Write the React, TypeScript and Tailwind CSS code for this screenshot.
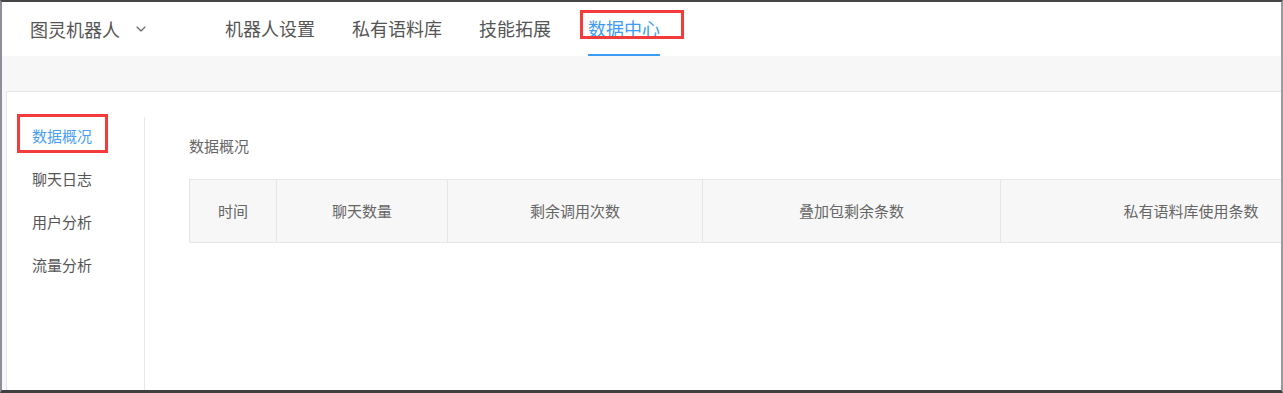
import { ChevronDown } from "lucide-react";

const navItems = ["机器人设置", "私有语料库", "技能拓展", "数据中心"];
const sideItems = ["数据概况", "聊天日志", "用户分析", "流量分析"];
const columns = [
  { title: "时间", width: "w-[87px]" },
  { title: "聊天数量", width: "w-[171px]" },
  { title: "剩余调用次数", width: "w-[255px]" },
  { title: "叠加包剩余条数", width: "w-[298px]" },
  { title: "私有语料库使用条数", width: "w-[380px]" },
];

export default function App() {
  return (
    <div
      className="relative w-[1283px] h-[393px] overflow-hidden flex flex-col border-t-2 border-t-[#454545] border-b-[3px] border-b-[#3f3f3f] border-l-2 border-l-[#8e8e96] border-r-2 border-r-[#9a9aa0] bg-white text-[#555]"
      style={{ fontFamily: '"Noto Sans CJK SC", "Noto Sans", sans-serif' }}
    >
      {/* top header */}
      <header className="h-[54px] shrink-0 flex items-stretch bg-white">
        <div className="flex items-center pl-[28px] w-[223px] text-[18px] text-[#555]">
          <span>图灵机器人</span>
          <ChevronDown className="ml-[13px] w-[16px] h-[16px] text-[#666]" strokeWidth={1.75} />
        </div>
        <nav className="flex items-stretch gap-[37px]">
          {navItems.map((item, i) => (
            <div
              key={item}
              className={`flex items-center text-[18px] border-b-2 ${
                i === 3 ? "text-[#3d9cf5] border-[#3d9cf5]" : "text-[#555] border-transparent"
              }`}
            >
              {item}
            </div>
          ))}
        </nav>
      </header>

      {/* grey area + card */}
      <div className="flex-1 bg-[#f7f7f7] pl-[4px] pt-[35px] flex flex-col">
        <div className="flex-1 flex bg-white border-l border-t border-[#e6e6e6]">
          <aside className="w-[138px] shrink-0 mt-[25px] border-r border-[#e8e8e8] pl-[25px]">
            {sideItems.map((item, i) => (
              <div
                key={item}
                className={`h-[43px] pb-[4px] flex items-center text-[15px] ${
                  i === 0 ? "text-[#4a9ff5]" : "text-[#555]"
                }`}
              >
                {item}
              </div>
            ))}
          </aside>
          <main className="flex-1 pl-[44px] pt-[42px] overflow-hidden">
            <div className="text-[15px] text-[#666] leading-[24px]">数据概况</div>
            <div className="mt-[21px] flex w-[1191px] h-[64px] bg-[#f7f7f7] border border-[#e6e6e6]">
              {columns.map((c, i) => (
                <div
                  key={c.title}
                  className={`${c.width} shrink-0 flex items-center justify-center text-[15px] text-[#666] ${
                    i < columns.length - 1 ? "border-r border-[#e6e6e6]" : ""
                  }`}
                >
                  {c.title}
                </div>
              ))}
            </div>
          </main>
        </div>
      </div>

      {/* annotation boxes */}
      <div className="absolute left-[578px] top-[8px] w-[104px] h-[29px] border-[3px] border-[#f33b3b]" />
      <div className="absolute left-[15px] top-[112px] w-[91px] h-[39px] border-[3px] border-[#f33b3b]" />
    </div>
  );
}
